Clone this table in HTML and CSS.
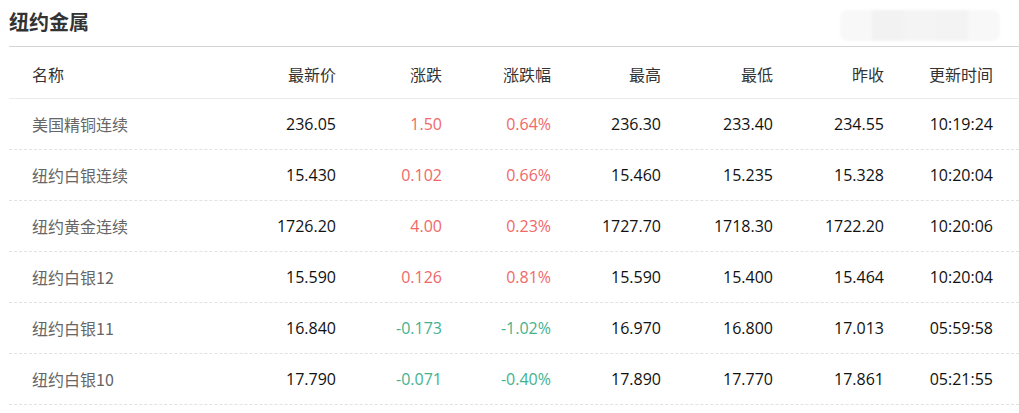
FILE: index.html
```html
<!DOCTYPE html>
<html lang="zh-CN">
<head>
<meta charset="utf-8">
<title>纽约金属</title>
<link rel="stylesheet" href="styles.css">
</head>
<body>
<div class="panel">
  <div class="panel-head">
    <h2 class="title">纽约金属</h2>
    <div class="mosaic" aria-hidden="true">
      <span></span><span></span><span></span><span></span><span></span>
    </div>
  </div>
  <div class="grid">
    <div class="row head">
      <div class="c name">名称</div>
      <div class="c">最新价</div>
      <div class="c">涨跌</div>
      <div class="c">涨跌幅</div>
      <div class="c">最高</div>
      <div class="c">最低</div>
      <div class="c">昨收</div>
      <div class="c">更新时间</div>
    </div>
    <div class="row">
      <div class="c name">美国精铜连续</div>
      <div class="c">236.05</div>
      <div class="c up">1.50</div>
      <div class="c up">0.64%</div>
      <div class="c">236.30</div>
      <div class="c">233.40</div>
      <div class="c">234.55</div>
      <div class="c">10:19:24</div>
    </div>
    <div class="row">
      <div class="c name">纽约白银连续</div>
      <div class="c">15.430</div>
      <div class="c up">0.102</div>
      <div class="c up">0.66%</div>
      <div class="c">15.460</div>
      <div class="c">15.235</div>
      <div class="c">15.328</div>
      <div class="c">10:20:04</div>
    </div>
    <div class="row">
      <div class="c name">纽约黄金连续</div>
      <div class="c">1726.20</div>
      <div class="c up">4.00</div>
      <div class="c up">0.23%</div>
      <div class="c">1727.70</div>
      <div class="c">1718.30</div>
      <div class="c">1722.20</div>
      <div class="c">10:20:06</div>
    </div>
    <div class="row">
      <div class="c name">纽约白银12</div>
      <div class="c">15.590</div>
      <div class="c up">0.126</div>
      <div class="c up">0.81%</div>
      <div class="c">15.590</div>
      <div class="c">15.400</div>
      <div class="c">15.464</div>
      <div class="c">10:20:04</div>
    </div>
    <div class="row">
      <div class="c name">纽约白银11</div>
      <div class="c">16.840</div>
      <div class="c down">-0.173</div>
      <div class="c down">-1.02%</div>
      <div class="c">16.970</div>
      <div class="c">16.800</div>
      <div class="c">17.013</div>
      <div class="c">05:59:58</div>
    </div>
    <div class="row">
      <div class="c name">纽约白银10</div>
      <div class="c">17.790</div>
      <div class="c down">-0.071</div>
      <div class="c down">-0.40%</div>
      <div class="c">17.890</div>
      <div class="c">17.770</div>
      <div class="c">17.861</div>
      <div class="c">05:21:55</div>
    </div>
  </div>
</div>
</body>
</html>
```
FILE: styles.css
```css
html, body {
  margin: 0;
  padding: 0;
  background: #fff;
}
body {
  font-family: "Open Sans", "Noto Sans CJK SC", sans-serif;
  font-size: 16px;
  color: #111;
}
.panel {
  margin-left: 9px;
  width: 1010px;
}
.panel-head {
  display: flex;
  justify-content: space-between;
  align-items: flex-start;
  height: 46px;
  border-bottom: 1px solid #d4d4d4;
}
.title {
  margin: 0;
  font-family: "Noto Sans CJK SC", sans-serif;
  font-size: 20px;
  font-weight: 700;
  color: #333;
  line-height: 43px;
}
.mosaic {
  display: flex;
  margin-top: 10px;
  margin-right: 19px;
  width: 160px;
  height: 31px;
  border-radius: 8px;
  overflow: hidden;
  filter: blur(1.5px);
}
.mosaic span {
  flex: 1;
}
.mosaic span:nth-child(1) { background: #f8f8f8; }
.mosaic span:nth-child(2) { background: #f2f2f2; }
.mosaic span:nth-child(3) { background: #f4f4f4; }
.mosaic span:nth-child(4) { background: #f3f3f3; }
.mosaic span:nth-child(5) { background: #f8f8f8; }
.row {
  display: grid;
  grid-template-columns: 221px 106px 106px 109px 110px 112px 111px 109px 1fr;
  height: 50px;
  align-items: center;
  border-bottom: 1px dashed #e2e2e2;
}
.row.head {
  box-sizing: border-box;
  height: 52px;
  padding-top: 3px;
  border-bottom: 1px solid #ececec;
}
.row.head .c {
  font-family: "Noto Sans CJK SC", sans-serif;
  color: #333;
}
.c {
  text-align: right;
  white-space: nowrap;
}
.c.name {
  text-align: left;
  padding-left: 23px;
  font-family: "Noto Sans CJK SC", sans-serif;
  color: #666;
}
.up {
  color: #f06868;
}
.down {
  color: #44b28e;
}
```
